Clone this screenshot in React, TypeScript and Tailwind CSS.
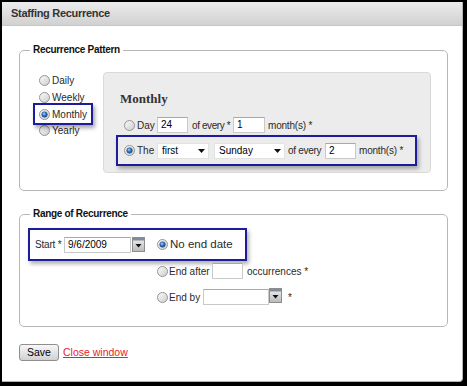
import React from "react";

function Radio({ checked }: { checked?: boolean }) {
  return (
    <svg width="11" height="11" viewBox="0 0 11 11" className="shrink-0">
      <defs>
        <linearGradient id="rg" x1="0" y1="0" x2="1" y2="1">
          <stop offset="0" stopColor="#fbfbfb" />
          <stop offset="1" stopColor="#cdcdcd" />
        </linearGradient>
        <radialGradient id="rd" cx="0.4" cy="0.35" r="0.7">
          <stop offset="0" stopColor="#a8d6ff" />
          <stop offset="0.5" stopColor="#2f76c9" />
          <stop offset="1" stopColor="#174a8c" />
        </radialGradient>
      </defs>
      <circle cx="5.5" cy="5.5" r="5" fill="url(#rg)" stroke="#959595" strokeWidth="1" />
      {checked && <circle cx="5.5" cy="5.5" r="2.8" fill="url(#rd)" stroke="#1b3f73" strokeWidth="0.5" />}
    </svg>
  );
}

function Box({ w, children }: { w: string; children?: React.ReactNode }) {
  return (
    <div
      className={`${w} h-[16px] shrink-0 border border-[#c9c9c9] border-t-[#a8a8a8] bg-white pl-[3px] text-[10px] leading-[14px] text-black`}
    >
      {children}
    </div>
  );
}

function Select({ w, label }: { w: string; label: string }) {
  return (
    <div
      className={`${w} flex h-[16px] shrink-0 items-center justify-between border border-[#e2e2e2] bg-white pl-[4px] pr-[3px] text-[10px] text-black`}
    >
      <span>{label}</span>
      <svg width="7" height="4" viewBox="0 0 7 4">
        <path d="M0 0 L7 0 L3.5 4 Z" fill="#111" />
      </svg>
    </div>
  );
}

function Cal() {
  return (
    <svg width="13" height="15" viewBox="0 0 13 15" className="shrink-0">
      <defs>
        <linearGradient id="cg" x1="0" y1="0" x2="0" y2="1">
          <stop offset="0" stopColor="#f2f2f2" />
          <stop offset="1" stopColor="#b9b9b9" />
        </linearGradient>
      </defs>
      <rect x="0.5" y="0.5" width="12" height="14" fill="url(#cg)" stroke="#8d8d8d" />
      <rect x="1" y="1" width="11" height="2.5" fill="#7f8c99" />
      <path d="M3.5 7 L9.5 7 L6.5 10.5 Z" fill="#111" />
    </svg>
  );
}

export default function App() {
  return (
    <div className="h-[386px] w-[467px] bg-black pl-[2px] pt-[2px] [font-family:'Liberation_Sans',Arial,sans-serif] text-[10px] text-[#2a2a2a]">
      <div className="h-[380px] w-[461px] rounded-br-[4px] border-b border-r border-[#b5b5b5] bg-white">
        {/* header */}
        <div className="flex h-[24px] items-center border-b border-[#c6c6c6] bg-gradient-to-b from-[#ececec] to-[#d1d1d1] pl-[9px] text-[11px] font-bold tracking-[-0.3px] text-[#333]">
          Staffing Recurrence
        </div>

        {/* Recurrence Pattern */}
        <fieldset className="ml-[17px] mt-[17px] w-[429px] rounded-[5px] border border-[#b7b7b7]">
          <legend className="ml-[10px] px-[3px] text-[10px] font-bold leading-[14px] tracking-[-0.3px] text-[#111]">
            Recurrence Pattern
          </legend>
          <div className="flex pb-[17px] pt-[15px]">
            <div className="ml-[19px] flex w-[64px] flex-col pt-[0.5px]">
              <div className="flex h-[16.7px] items-center gap-[2px]">
                <Radio />
                <span>Daily</span>
              </div>
              <div className="flex h-[16.7px] items-center gap-[2px]">
                <Radio />
                <span>Weekly</span>
              </div>
              <div className="relative flex h-[16.7px] items-center gap-[2px]">
                <Radio checked />
                <span>Monthly</span>
                <div className="absolute left-[-6px] top-[-3px] h-[22px] w-[60px] border-2 border-[#1d1d9c] shadow-[2px_3px_4px_rgba(0,0,0,0.35)]" />
              </div>
              <div className="flex h-[16.7px] items-center gap-[2px]">
                <Radio />
                <span>Yearly</span>
              </div>
            </div>

            <div className="h-[101px] w-[328px] rounded-[4px] border border-[#dadada] bg-[#ececec] pl-[12px] pt-[17px]">
              <div className="ml-[4px] text-[13px] font-bold leading-[18px] text-[#333] [font-family:'Liberation_Serif',serif]">
                Monthly
              </div>
              <div className="mt-[9px] flex h-[16px] items-center pl-[8px]">
                <Radio />
                <span className="ml-[2px] w-[18px] shrink-0">Day</span>
                <span className="ml-[2px]">
                  <Box w="w-[31px]">24</Box>
                </span>
                <span className="ml-[4px] w-[41px] shrink-0 whitespace-nowrap tracking-[-0.4px]">of every *</span>
                <Box w="w-[32px]">1</Box>
                <span className="ml-[3px] whitespace-nowrap tracking-[-0.2px]">month(s) *</span>
              </div>
              <div className="mt-[2px] flex h-[31px] w-[301px] items-center border-2 border-[#1d1d9c] pl-[6px] shadow-[2px_3px_4px_rgba(0,0,0,0.3)]">
                <Radio checked />
                <span className="ml-[2px] w-[18px] shrink-0">The</span>
                <span className="ml-[2px]">
                  <Select w="w-[52px]" label="first" />
                </span>
                <span className="ml-[5px]">
                  <Select w="w-[71px]" label="Sunday" />
                </span>
                <span className="ml-[3px] w-[37px] shrink-0 whitespace-nowrap tracking-[-0.3px]">of every</span>
                <Box w="w-[31px]">2</Box>
                <span className="ml-[3px] whitespace-nowrap tracking-[-0.2px]">month(s) *</span>
              </div>
            </div>
          </div>
        </fieldset>

        {/* Range of Recurrence */}
        <fieldset className="ml-[17px] mt-[16px] w-[429px] rounded-[5px] border border-[#b7b7b7] pb-[21px] pt-[7px]">
          <legend className="ml-[10px] px-[3px] text-[10px] font-bold leading-[14px] tracking-[-0.3px] text-[#111]">
            Range of Recurrence
          </legend>
          <div className="ml-[8px] flex h-[33px] w-[219px] items-center border-2 border-[#1d1d9c] pl-[5px] shadow-[2px_3px_4px_rgba(0,0,0,0.3)]">
            <span className="w-[28px] shrink-0 whitespace-nowrap tracking-[-0.2px]">Start *</span>
            <span className="ml-[1px]">
              <Box w="w-[67px]">9/6/2009</Box>
            </span>
            <span className="ml-[1px] flex">
              <Cal />
            </span>
            <span className="ml-[12px] flex">
              <Radio checked />
            </span>
            <span className="ml-[2px] whitespace-nowrap text-[11.5px]">No end date</span>
          </div>
          <div className="ml-[137px] mt-[2px] flex h-[16px] items-center">
            <Radio />
            <span className="ml-[1px] w-[43px] shrink-0 whitespace-nowrap">End after</span>
            <Box w="w-[31px]" />
            <span className="ml-[4px] whitespace-nowrap">occurrences *</span>
          </div>
          <div className="ml-[137px] mt-[10px] flex h-[16px] items-center">
            <Radio />
            <span className="ml-[1px] w-[34px] shrink-0 whitespace-nowrap">End by</span>
            <Box w="w-[66px]" />
            <span className="-mt-[3px] flex">
              <Cal />
            </span>
            <span className="ml-[6px]">*</span>
          </div>
        </fieldset>

        {/* buttons */}
        <div className="ml-[17px] mt-[17px] flex items-center">
          <div className="flex h-[17px] w-[40px] items-center justify-center rounded-[3px] border border-[#8e8e8e] bg-gradient-to-b from-[#f7f7f7] to-[#d2d2d2] text-[10.5px] text-black">
            Save
          </div>
          <span className="ml-[4px] text-[10.5px] text-[#e5232f] underline">Close window</span>
        </div>
      </div>
    </div>
  );
}
